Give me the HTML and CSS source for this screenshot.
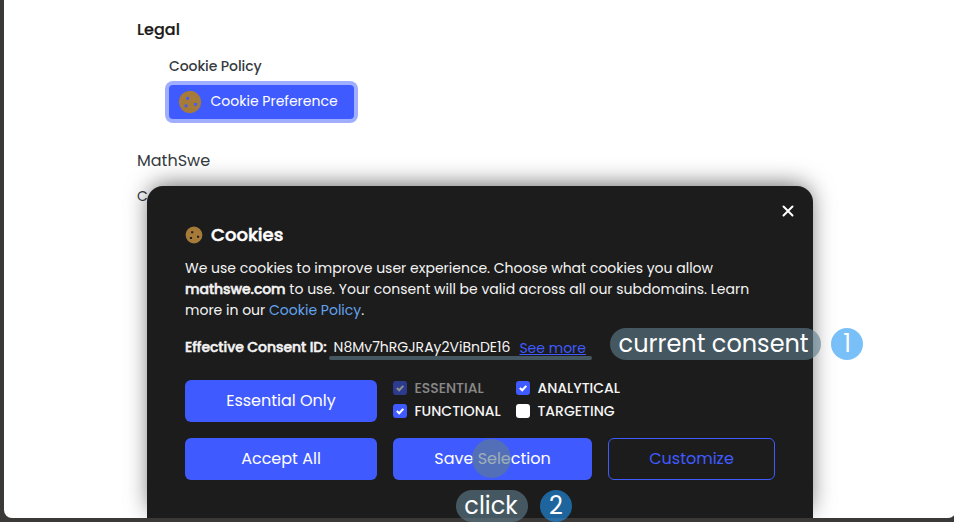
FILE: index.html
```
<!DOCTYPE html>
<html lang="en">
<head>
<meta charset="utf-8">
<title>MathSwe Cookies</title>
<link rel="stylesheet" href="styles.css">
</head>
<body>
<svg class="defs" aria-hidden="true">
  <symbol id="cookie" viewBox="0 0 24 24">
    <path fill="#a67a38" fill-rule="evenodd" d="M12 .8 16.2 1.6 19.8 4 22.3 7.5 23.2 12 22.4 16.2 20 19.8 16.4 22.3 12 23.2 7.7 22.4 4.1 20 1.7 16.3.8 12 1.6 7.7 4 4.1 7.6 1.7ZM8.200 7v2.800h2.800V7ZM6.600 14.500v2.800h2.800v-2.800ZM16 13v2.800h2.800v-2.800Z"/>
  </symbol>
  <symbol id="check" viewBox="0 0 14 14">
    <path fill="none" stroke="currentColor" stroke-width="2.100" d="M3.800 7 6.200 9.200 10.300 4.900"/>
  </symbol>
</svg>
<div class="window">
  <main class="page">
    <h2 class="legal">Legal</h2>
    <section class="policy">
      <h3 class="policy-title">Cookie Policy</h3>
      <button class="preference"><svg><use href="#cookie"/></svg><span>Cookie Preference</span></button>
    </section>
    <p class="brand">MathSwe</p>
    <p class="copy">C</p>
  </main>
  <div class="modal">
    <svg class="close" viewBox="0 0 12 12"><path d="M1.500 1.500 10.500 10.500M10.500 1.500 1.500 10.500"/></svg>
    <h1 class="title"><svg><use href="#cookie"/></svg><span>Cookies</span></h1>
    <p class="intro">We use cookies to improve user experience. Choose what cookies you allow <strong>mathswe.com</strong> to use. Your consent will be valid across all our subdomains. Learn more in our <a>Cookie Policy</a>.</p>
    <div class="consent"><strong>Effective Consent ID:</strong><span class="id">N8Mv7hRGJRAy2ViBnDE16</span><a class="more">See more</a><i class="marker"></i></div>
    <div class="actions">
      <button class="btn">Essential Only</button>
      <div class="options">
        <label class="option off"><span class="box"><svg><use href="#check"/></svg></span><span>ESSENTIAL</span></label>
        <label class="option"><span class="box"><svg><use href="#check"/></svg></span><span>ANALYTICAL</span></label>
        <label class="option"><span class="box"><svg><use href="#check"/></svg></span><span>FUNCTIONAL</span></label>
        <label class="option"><span class="box empty"></span><span>TARGETING</span></label>
      </div>
      <button class="btn">Accept All</button>
      <button class="btn save">Save Selection<i class="tap"></i></button>
      <button class="btn outline">Customize</button>
    </div>
  </div>
</div>
<div class="note note-consent"><span class="pill">current consent</span><span class="step">1</span></div>
<div class="note note-click"><span class="pill">click</span><span class="step">2</span></div>
</body>
</html>
```
FILE: styles.css
```
* { box-sizing: border-box; margin: 0; padding: 0; }
body {
  height: 522px;
  padding: 0 0 4px 4px;
  background: #3b3938;
  font-family: Poppins, Inter, sans-serif;
  font-size: 14px;
  overflow: hidden;
  position: relative;
}
button { border: 0; font: inherit; }
.defs { display: none; }
.window {
  position: relative;
  height: 518px;
  margin-right: -2px;
  background: #fff;
  border-radius: 0 0 8px 8px;
  overflow: hidden;
}
.page { padding: 18px 0 0 133px; color: #343a40; }
.legal { font-size: 16px; line-height: 24px; font-weight: 500; color: #191919; -webkit-text-stroke: .2px; }
.policy { padding: 14px 0 0 32px; }
.policy-title { font-size: 14px; line-height: 20px; font-weight: 500; letter-spacing: -.08px; margin-bottom: 9px; }
.preference {
  display: flex;
  align-items: center;
  width: 185px;
  height: 34px;
  padding-left: 9px;
  gap: 8.5px;
  border-radius: 4px;
  background: #3f5bff;
  color: #fff;
  box-shadow: 0 0 0 4px #9faeff;
}
.preference svg { width: 24px; height: 24px; }
.preference span { line-height: 20px; padding-bottom: 2px; }
.brand { font-size: 16px; line-height: 24px; margin-top: 30px; }
.copy { line-height: 20px; margin-top: 13px; }
.modal {
  position: absolute;
  left: 143px;
  top: 186px;
  width: 666px;
  height: 332px;
  padding: 38px;
  border-radius: 16px 16px 0 0;
  background: #1c1c1c;
  color: #f4f4f4;
  box-shadow: 0 -4px 24px -4px rgba(0, 0, 0, .65);
}
.close { position: absolute; right: 19px; top: 19px; width: 12px; height: 12px; stroke: #fff; stroke-width: 2; stroke-linecap: round; }
.title { display: flex; align-items: center; gap: 8px; height: 22px; font-size: 18px; font-weight: 500; color: #fff; -webkit-text-stroke: .5px; }
.title svg { width: 18px; height: 18px; -webkit-text-stroke: 0; }
.title span { padding-bottom: 2px; }
.intro { width: 590px; line-height: 21px; margin-top: 12px; }
.intro strong, .consent strong { font-weight: 500; letter-spacing: -.06px; -webkit-text-stroke: .5px; }
.intro a { color: #62a3ee; }
.consent { position: relative; display: flex; align-items: center; height: 20px; margin-top: 16px; }
.id { margin-left: 7px; }
.more { margin-left: 9px; padding-top: 2px; color: #3f5bff; text-decoration: underline; }
.marker { position: absolute; left: 144px; top: 19px; width: 263px; height: 4px; border-radius: 2px; background: rgba(96, 125, 139, .62); }
.actions { display: grid; grid-template-columns: 192px 199px 167px; grid-auto-rows: 42px; gap: 16px; margin-top: 23px; }
.btn { position: relative; padding-bottom: 2px; border-radius: 6px; background: #3f5bff; color: #fff; font-size: 16px; }
.outline { background: none; border: 1px solid #3f5bff; color: #3f5bff; }
.save .tap { position: absolute; left: 79px; top: 1px; width: 39px; height: 39px; border-radius: 50%; background: rgba(96, 125, 139, .62); }
.options { grid-column: span 2; display: grid; grid-template-columns: 123px 150px; grid-template-rows: 23px 23px; margin-top: -4px; }
.option { display: flex; align-items: center; gap: 7.4px; font-weight: 500; }
.option span:last-child:not(.box) { padding-top: 2px; }
.off { opacity: .5; }
.box { width: 14px; height: 14px; border-radius: 3px; background: #3f5bff; color: #fff; }
.box svg { display: block; width: 14px; height: 14px; }
.empty { background: #fff; }
.note { position: absolute; display: flex; color: #fff; font-size: 24px; line-height: 32px; }
.note-consent { left: 610px; top: 328px; gap: 10px; }
.note-click { left: 456px; top: 490px; gap: 12px; }
.pill { height: 32px; border-radius: 16px; background: rgba(96, 125, 139, .62); text-align: center; }
.note-consent .pill { width: 211px; padding-left: 8.6px; text-align: left; }
.note-click .pill { width: 72px; padding-right: 2px; }
.step { width: 32px; height: 32px; border-radius: 50%; background: rgba(33, 150, 243, .6); text-align: center; }
```
